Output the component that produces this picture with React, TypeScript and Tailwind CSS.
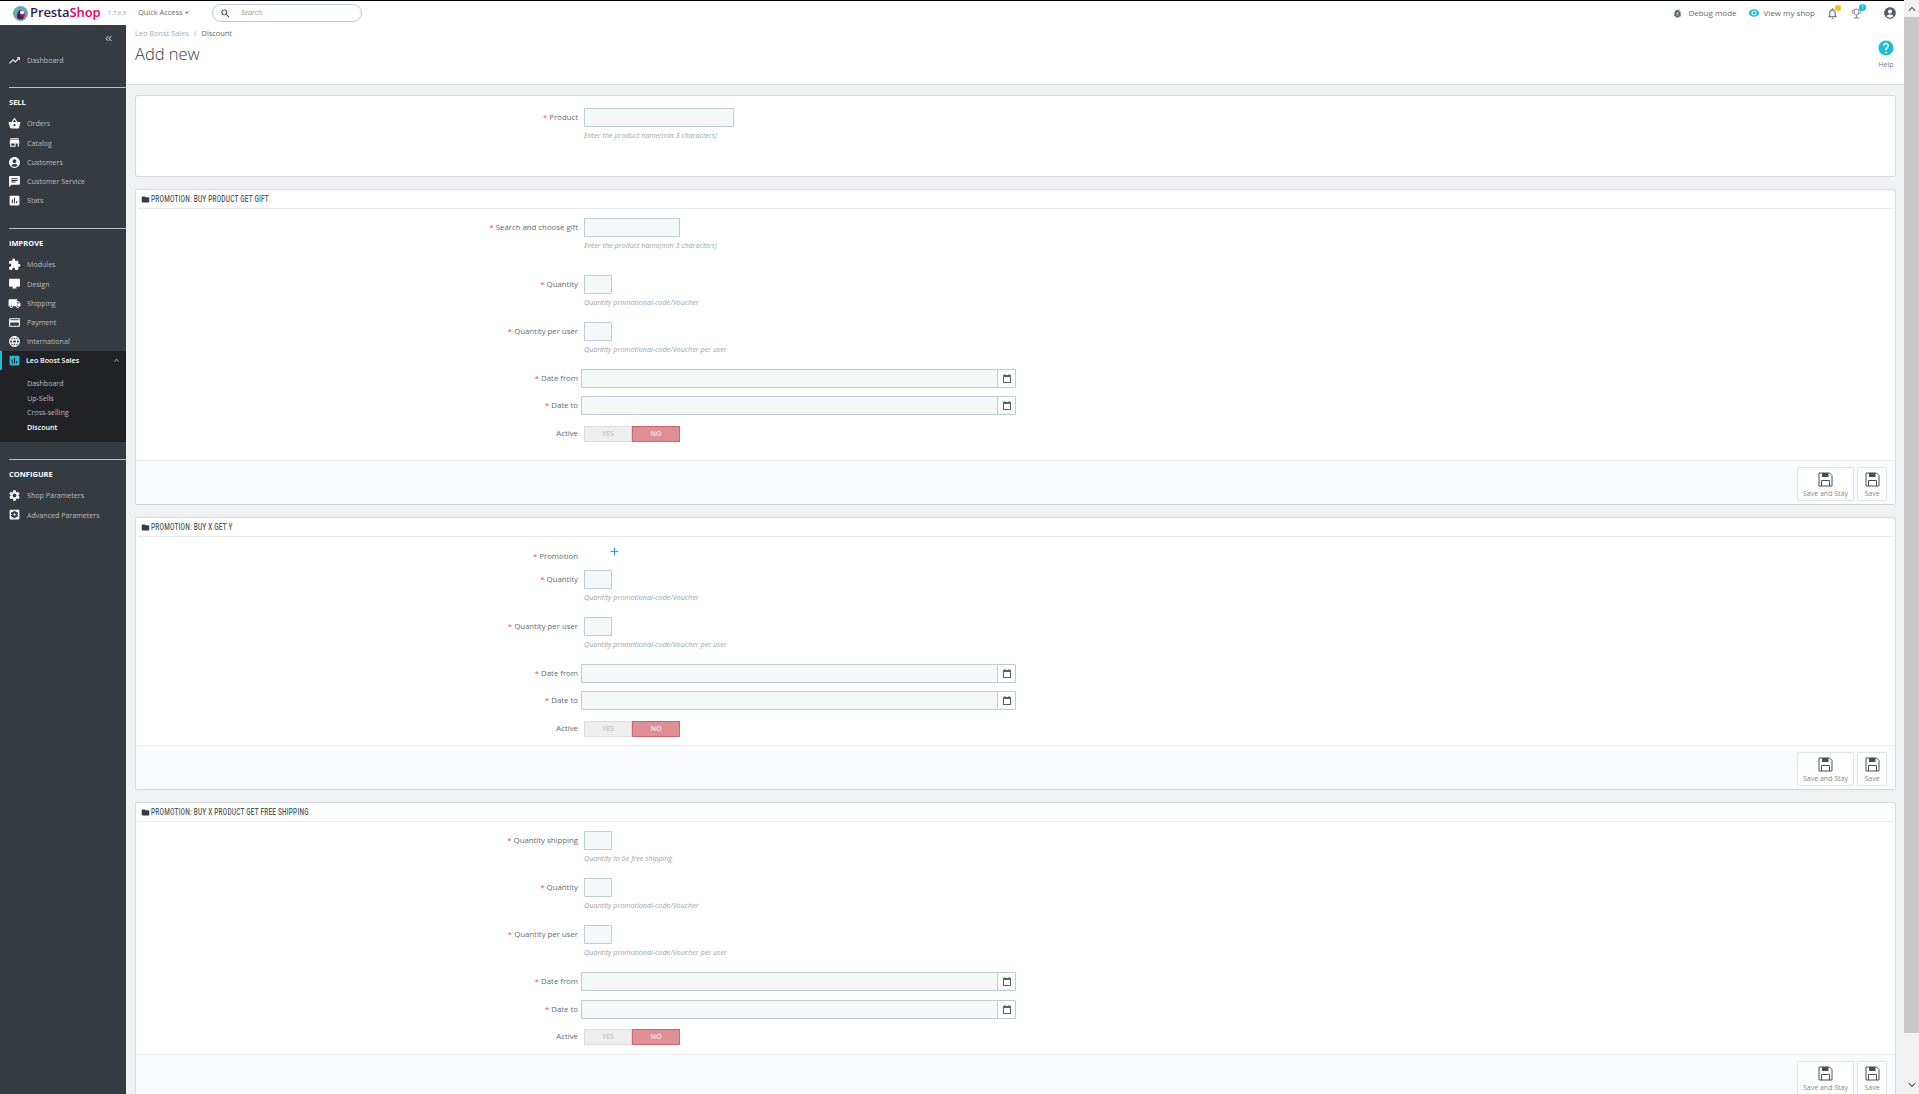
import React from 'react';
import {
  MdTrendingUp, MdShoppingBasket, MdStore, MdAccountCircle, MdChat, MdAssessment, MdExtension,
  MdDesktopMac, MdLocalShipping, MdCreditCard, MdLanguage, MdSettings, MdSettingsApplications,
  MdBugReport, MdRemoveRedEye, MdNotificationsNone, MdHelp, MdFolder, MdAdd, MdSearch,
  MdKeyboardDoubleArrowLeft, MdExpandLess, MdArrowDropDown, MdOutlineEmojiEvents,
  MdKeyboardArrowUp, MdKeyboardArrowDown,
} from 'react-icons/md';

const FONT = "font-['Open_Sans','Noto_Sans',sans-serif]";

const FloppyIcon = () => (
  <svg width="15" height="15" viewBox="0 0 15 15" fill="none" stroke="#4a4f57" strokeWidth="1">
    <path d="M1 1h10.5L14 3.5V14H1z" />
    <rect x="4" y="1" width="6.5" height="4" fill="#4a4f57" stroke="none" />
    <path d="M3.5 14V8.5h8V14" />
  </svg>
);

const CalendarIcon = () => (
  <svg width="8" height="9" viewBox="0 0 8 9">
    <rect x="0.5" y="1.5" width="7" height="7" fill="#ffffff" stroke="#5c6168" />
    <rect x="0" y="1" width="8" height="2" fill="#5c6168" />
    <rect x="1.5" y="0" width="1" height="2" fill="#5c6168" />
    <rect x="5.5" y="0" width="1" height="2" fill="#5c6168" />
  </svg>
);

const SideItem = ({ icon: Icon, label }: { icon: React.ComponentType<{ size?: number; className?: string }>; label: string }) => (
  <div className="flex items-center h-[19.2px] pl-[8px]">
    <span className="w-[19px] flex"><Icon size={13} className="text-white" /></span>
    <span className="text-[7.1px] text-[#bebebe]">{label}</span>
  </div>
);

const SideHeading = ({ label }: { label: string }) => (
  <div className="ml-[9px] border-t border-[#bebebe] pt-[6.5px] pb-[5.5px] text-[7.5px] leading-[14px] font-bold text-white uppercase">{label}</div>
);

const Field = ({ label, required = true, help, height, inputWidth, date }: {
  label: string; required?: boolean; help?: string; height: string; inputWidth?: string; date?: boolean;
}) => (
  <div className={`flex ${height}`}>
    <div className="w-[442px] h-[19px] flex items-center justify-end text-[7.8px] text-[#5f6b70]">
      {required && <span className="text-[#f5483b] mr-[2px]">*</span>}
      {label}
    </div>
    {date ? (
      <div className="ml-[3px] w-[435px] h-[19px] flex border border-[#bbcdd2] rounded-[1px] bg-[#f5f8f9]">
        <div className="flex-1" />
        <div className="w-[18px] flex items-center justify-center border-l border-[#bbcdd2] bg-[#fcfdfd]">
          <CalendarIcon />
        </div>
      </div>
    ) : (
      <div className="ml-[6px]">
        <div className={`${inputWidth} h-[19px] border border-[#bbcdd2] rounded-[1px] bg-[#f5f8f9]`} />
        {help && <div className="mt-[3px] text-[7.2px] leading-[10px] italic text-[#9aa6ab]">{help}</div>}
      </div>
    )}
  </div>
);

const Toggle = ({ height }: { height: string }) => (
  <div className={`flex ${height}`}>
    <div className="w-[442px] h-[16px] flex items-center justify-end text-[7.8px] text-[#5f6b70]">Active</div>
    <div className="ml-[6px] w-[96px] h-[16px] flex text-[7px] font-semibold">
      <div className="w-[48px] flex items-center justify-center bg-[#eeeeee] border border-[#dcdcdc] text-[#c4c4c4]">YES</div>
      <div className="w-[48px] flex items-center justify-center bg-[#e08f95] border border-[#c9666e] text-[#fbe9ea]">NO</div>
    </div>
  </div>
);

const SaveButton = ({ label, width }: { label: string; width: string }) => (
  <div className={`${width} h-[34px] flex flex-col items-center bg-white border border-[#dfe3e5] rounded-[1px] pt-[4px]`}>
    <FloppyIcon />
    <span className="mt-[2px] text-[7px] leading-[9px] text-[#7b8a90]">{label}</span>
  </div>
);

const Panel = ({ title, children }: { title: string; children: React.ReactNode }) => (
  <div className="mt-[12px] bg-white border border-[#d5dcdf] border-b-[#cfd4d6] rounded-[3px]">
    <div className="mx-[2px] h-[19px] flex items-center border-b border-[#e8ebec] pl-[3px]">
      <MdFolder size={9} className="text-[#363a41]" />
      <span className="ml-[1px] inline-block origin-left scale-x-[0.75] font-['Roboto',sans-serif] text-[8.5px] font-medium tracking-[0.3px] text-[#4d5b61] uppercase whitespace-nowrap">{title}</span>
    </div>
    {children}
  </div>
);

const Footer = () => (
  <div className="h-[44px] bg-[#fafbfc] border-t border-[#e8ebec] flex justify-end gap-[3px] pt-[6px] pr-[8px]">
    <SaveButton label="Save and Stay" width="w-[57px]" />
    <SaveButton label="Save" width="w-[30px]" />
  </div>
);

const App: React.FC = () => {
  return (
    <div className={`${FONT} h-screen w-full flex overflow-hidden bg-[#eff1f2]`}>
      <div className="flex-1 min-w-0 flex flex-col">
        {/* Header */}
        <header className="h-[25px] shrink-0 bg-white border-t border-black flex items-center">
          <svg width="15" height="15" viewBox="0 0 30 30" className="ml-[13px]">
            <circle cx="15" cy="15" r="15" fill="#6ba7b8" />
            <path d="M8 22c0-8 3-14 8-14s7 5 7 10-3 9-7 9-8-2-8-5z" fill="#34303f" />
            <circle cx="18" cy="13" r="4" fill="#ffffff" />
            <circle cx="20" cy="19" r="3.5" fill="#df0067" />
          </svg>
          <span className="ml-[2px] w-[71px] text-[13px] font-semibold tracking-[-0.1px] text-[#2f1c4f]">Presta<span className="text-[#df0067]">Shop</span></span>
          <span className="ml-[7px] w-[18px] text-[6px] text-[#8a979c]">1.7.6.5</span>
          <span className="ml-[12px] w-[54px] flex items-center text-[7.4px] text-[#5f6b70] whitespace-nowrap">Quick Access<MdArrowDropDown size={11} /></span>
          <div className="ml-[20px] w-[150px] h-[18px] flex items-center border border-[#bbcdd2] rounded-full pl-[7px]">
            <MdSearch size={11} className="text-[#363a41]" />
            <span className="ml-[10px] text-[7px] italic text-[#8d9ba0]">Search</span>
          </div>
          <div className="ml-auto flex items-center text-[8px] text-[#5f6b70]">
            <MdBugReport size={11} className="text-[#5f6b70]" />
            <span className="ml-[5px]">Debug mode</span>
            <MdRemoveRedEye size={12} className="ml-[11px] text-[#25b9d7]" />
            <span className="ml-[4px]">View my shop</span>
            <span className="relative ml-[11px] flex">
              <MdNotificationsNone size={13} className="text-[#5f6b70]" />
              <span className="absolute -top-[2px] -right-[2px] w-[6px] h-[6px] rounded-full bg-[#fbbb22]" />
            </span>
            <span className="relative ml-[11px] flex">
              <MdOutlineEmojiEvents size={13} className="text-[#8d9ba0]" />
              <span className="absolute -top-[3px] -right-[3px] w-[7px] h-[7px] rounded-full bg-[#25b9d7] text-[5px] leading-[7px] text-center text-white">1</span>
            </span>
            <MdAccountCircle size={14} className="ml-[20px] mr-[7px] text-[#4f5b66]" />
          </div>
        </header>

        <div className="flex-1 min-h-0 flex">
          {/* Sidebar */}
          <aside className="w-[126px] shrink-0 bg-[#363a41]">
            <div className="h-[26px] flex items-center justify-end pr-[12px]">
              <MdKeyboardDoubleArrowLeft size={11} className="text-[#bebebe]" />
            </div>
            <SideItem icon={MdTrendingUp} label="Dashboard" />
            <div className="h-[17px]" />
            <SideHeading label="Sell" />
            <SideItem icon={MdShoppingBasket} label="Orders" />
            <SideItem icon={MdStore} label="Catalog" />
            <SideItem icon={MdAccountCircle} label="Customers" />
            <SideItem icon={MdChat} label="Customer Service" />
            <SideItem icon={MdAssessment} label="Stats" />
            <div className="h-[18px]" />
            <SideHeading label="Improve" />
            <SideItem icon={MdExtension} label="Modules" />
            <SideItem icon={MdDesktopMac} label="Design" />
            <SideItem icon={MdLocalShipping} label="Shipping" />
            <SideItem icon={MdCreditCard} label="Payment" />
            <SideItem icon={MdLanguage} label="International" />
            <div className="bg-[#202226] h-[91px]">
              <div className="h-[19px] flex items-center border-l-2 border-[#25b9d7] pl-[6px]">
                <span className="w-[18px] flex"><MdAssessment size={13} className="text-[#25b9d7]" /></span>
                <span className="text-[7.1px] font-semibold text-white">Leo Boost Sales</span>
                <MdExpandLess size={11} className="ml-auto mr-[4px] text-[#8d9ba0]" />
              </div>
              <div className="pt-[6px] pl-[27px] text-[7.1px] leading-[14.6px] text-[#bebebe]">
                <div>Dashboard</div>
                <div>Up-Sells</div>
                <div>Cross-selling</div>
                <div className="font-semibold text-white">Discount</div>
              </div>
            </div>
            <div className="h-[17px]" />
            <SideHeading label="Configure" />
            <SideItem icon={MdSettings} label="Shop Parameters" />
            <SideItem icon={MdSettingsApplications} label="Advanced Parameters" />
          </aside>

          {/* Main */}
          <main className="flex-1 min-w-0">
            <div className="h-[60px] bg-white border-b border-[#d5dcdf] flex justify-between pl-[9px] pr-[9px]">
              <div>
                <div className="mt-[3px] text-[7.4px] leading-[10px] text-[#a3aeb2]">
                  Leo Boost Sales<span className="mx-[5px]">/</span><span className="text-[#5f6b70]">Discount</span>
                </div>
                <h1 className="mt-[4px] text-[16.5px] leading-[24px] font-light text-[#363a41]">Add new</h1>
              </div>
              <div className="flex flex-col items-center mt-[14px]">
                <MdHelp size={18} className="text-[#25b9d7]" />
                <span className="mt-[3px] text-[7px] text-[#6c868e]">Help</span>
              </div>
            </div>

            <div className="pt-[10px] pl-[9px] pr-[8px]">
              <div className="h-[82px] bg-white border border-[#d5dcdf] rounded-[3px] pt-[12px]">
                <Field label="Product" height="h-[40px]" inputWidth="w-[150px]" help="Enter the product name(min 3 characters)" />
              </div>

              <Panel title="Promotion: Buy product get gift">
                <div className="h-[251px] pt-[9px]">
                  <Field label="Search and choose gift" height="h-[57px]" inputWidth="w-[96px]" help="Enter the product name(min 3 characters)" />
                  <Field label="Quantity" height="h-[47px]" inputWidth="w-[28px]" help="Quantity promotional-code/Voucher" />
                  <Field label="Quantity per user" height="h-[47px]" inputWidth="w-[28px]" help="Quantity promotional-code/Voucher per user" />
                  <Field label="Date from" height="h-[27px]" date />
                  <Field label="Date to" height="h-[30px]" date />
                  <Toggle height="h-[34px]" />
                </div>
                <Footer />
              </Panel>

              <Panel title="Promotion: Buy X get Y">
                <div className="h-[208px]">
                  <div className="flex h-[33px]">
                    <div className="w-[442px] pt-[13px] h-[33px] flex justify-end text-[7.8px] leading-[12px] text-[#5f6b70]">
                      <span className="text-[#f5483b] mr-[2px]">*</span>Promotion
                    </div>
                    <MdAdd size={13} className="ml-[30px] mt-[8px] text-[#1ba5e0]" />
                  </div>
                  <Field label="Quantity" height="h-[47px]" inputWidth="w-[28px]" help="Quantity promotional-code/Voucher" />
                  <Field label="Quantity per user" height="h-[47px]" inputWidth="w-[28px]" help="Quantity promotional-code/Voucher per user" />
                  <Field label="Date from" height="h-[27px]" date />
                  <Field label="Date to" height="h-[30px]" date />
                  <Toggle height="h-[24px]" />
                </div>
                <Footer />
              </Panel>

              <Panel title="Promotion: Buy X product get free shipping">
                <div className="h-[232px] pt-[9px]">
                  <Field label="Quantity shipping" height="h-[47px]" inputWidth="w-[28px]" help="Quantity to be free shipping" />
                  <Field label="Quantity" height="h-[47px]" inputWidth="w-[28px]" help="Quantity promotional-code/Voucher" />
                  <Field label="Quantity per user" height="h-[47px]" inputWidth="w-[28px]" help="Quantity promotional-code/Voucher per user" />
                  <Field label="Date from" height="h-[28px]" date />
                  <Field label="Date to" height="h-[29px]" date />
                  <Toggle height="h-[25px]" />
                </div>
                <Footer />
              </Panel>
            </div>
          </main>
        </div>
      </div>

      {/* Scrollbar */}
      <div className="w-[15px] shrink-0 flex flex-col bg-[#f1f1f1]">
        <div className="h-[17px] flex items-center justify-center"><MdKeyboardArrowUp size={14} className="text-[#505050]" /></div>
        <div className="h-[1016px] bg-[#c8c8c8]" />
        <div className="flex-1 flex items-end justify-center pb-[2px]"><MdKeyboardArrowDown size={14} className="text-[#505050]" /></div>
      </div>
    </div>
  );
};

export default App;
